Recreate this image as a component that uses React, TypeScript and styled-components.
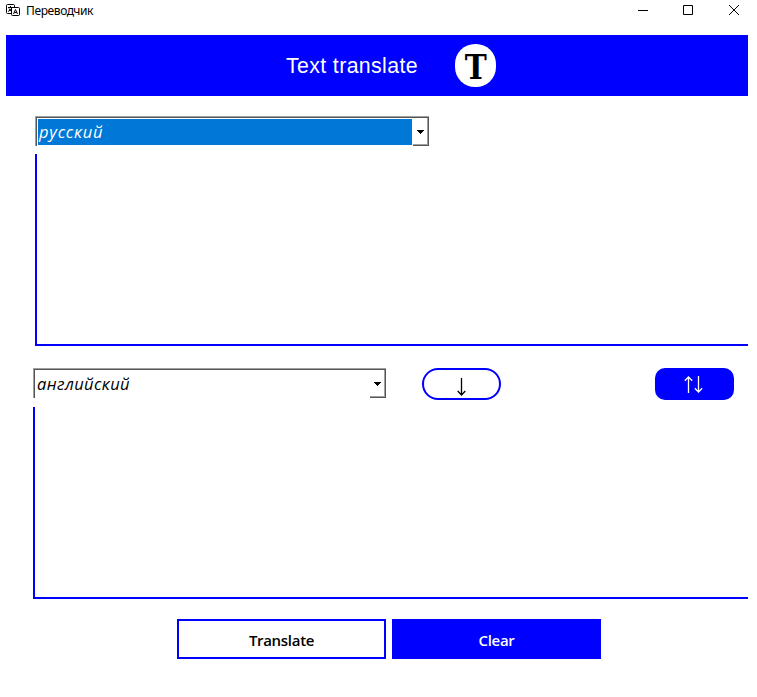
import React from "react";
import styled, { createGlobalStyle } from "styled-components";

const GlobalStyle = createGlobalStyle`
  * { box-sizing: border-box; }
  body { margin: 0; background: #fff; }
`;

const Window = styled.main`
  display: flex;
  flex-direction: column;
  width: 757px;
  height: 697px;
  background: #fff;
  overflow: hidden;
`;

const TitleBar = styled.div`
  display: flex;
  align-items: center;
  height: 35px;
  padding: 0 17px 14px 6px;
`;

const Caption = styled.span`
  flex: 1;
  margin-left: 6px;
  font: 12px/20px "Noto Sans", sans-serif;
  letter-spacing: -0.38px;
  color: #000;
  padding-top: 1px;
`;

const WindowControls = styled.div`
  display: flex;
  gap: 34px;
  padding-bottom: 1px;
`;

const ControlIcon = styled.svg`
  display: block;
  width: 12px;
  height: 12px;
  fill: none;
  stroke: #000;
`;

const Banner = styled.header`
  display: flex;
  align-items: center;
  height: 61px;
  margin: 0 9px 0 6px;
  padding-left: 280px;
  background: #0000ff;
`;

const BannerTitle = styled.h1`
  width: 169px;
  margin: 0;
  font: 400 21.3px/30px "Liberation Sans", sans-serif;
  letter-spacing: 0.38px;
  color: #fff;
`;

const Badge = styled.div`
  display: flex;
  align-items: center;
  justify-content: center;
  width: 41px;
  height: 43px;
  padding-top: 2px;
  border-radius: 20px;
  background: #fff;
`;

const BadgeLetter = styled.span`
  font: 700 34px/40px "DejaVu Serif", serif;
  color: #000;
  transform: scaleX(0.87);
`;

const Controls = styled.div<{ $top: number; $left: number }>`
  display: flex;
  height: 32px;
  margin: ${(p) => p.$top}px 23px 0 ${(p) => p.$left}px;
`;

const Combo = styled.div<{ $width: number }>`
  display: flex;
  width: ${(p) => p.$width}px;
  height: 30px;
  border-top: 1px solid #a0a0a0;
  border-left: 1px solid #a0a0a0;
`;

const ComboInner = styled.div`
  display: flex;
  flex: 1;
  border-top: 1px solid #555;
  border-left: 1px solid #555;
`;

const ComboValue = styled.div<{ $selected?: boolean; $spacing: number }>`
  flex: 1;
  height: 26px;
  margin: 1px 0 0 1px;
  padding-left: 1px;
  background: ${(p) => (p.$selected ? "#0078d7" : "#fff")};
  color: ${(p) => (p.$selected ? "#fff" : "#000")};
  font: italic 400 16.5px/26px "Open Sans", sans-serif;
  letter-spacing: ${(p) => p.$spacing}px;
`;

const ComboButton = styled.div`
  display: flex;
  align-items: center;
  justify-content: center;
  width: 16px;
  height: 28px;
  margin-left: 1px;
  border-right: 1px solid #555;
  border-bottom: 1px solid #555;
  box-shadow: inset -1px -1px #a0a0a0;
`;

const TextPane = styled.div<{ $top: number; $left: number }>`
  height: 192px;
  margin: ${(p) => p.$top}px 9px 0 ${(p) => p.$left}px;
  border-left: 2px solid #0000ff;
  border-bottom: 2px solid #0000ff;
`;

const ArrowButton = styled.button<{ $filled?: boolean }>`
  display: flex;
  align-items: center;
  justify-content: center;
  width: 79px;
  height: 32px;
  margin-left: ${(p) => (p.$filled ? "auto" : "36px")};
  padding: ${(p) => (p.$filled ? "1px 2px 0 0" : "5px 0 0")};
  border: 2px solid #0000ff;
  border-radius: ${(p) => (p.$filled ? "10px" : "16px")};
  background: ${(p) => (p.$filled ? "#0000ff" : "#fff")};
  color: ${(p) => (p.$filled ? "#fff" : "#000")};
`;

const ArrowIcon = styled.svg`
  display: block;
  fill: none;
  stroke: currentColor;
  stroke-width: 1.3;
`;

const Actions = styled.div`
  display: flex;
  gap: 6px;
  margin: 20px 0 0 177px;
`;

const ActionButton = styled.button<{ $filled?: boolean }>`
  width: 209px;
  height: 40px;
  padding: 1px 0 0;
  border: 2px solid #0000ff;
  background: ${(p) => (p.$filled ? "#0000ff" : "#fff")};
  color: ${(p) => (p.$filled ? "#fff" : "#000")};
  font: 600 15px/20px "Open Sans", sans-serif;
  letter-spacing: -0.3px;
`;

function LanguageCombo(props: {
  label: string;
  width: number;
  spacing: number;
  selected?: boolean;
}) {
  return (
    <Combo $width={props.width}>
      <ComboInner>
        <ComboValue $selected={props.selected} $spacing={props.spacing}>
          {props.label}
        </ComboValue>
        <ComboButton>
          <svg width="7" height="4" viewBox="0 0 7 4" shapeRendering="crispEdges">
            <path d="M0 0H7V1H6V2H5V3H4V4H3V3H2V2H1V1H0Z" />
          </svg>
        </ComboButton>
      </ComboInner>
    </Combo>
  );
}

export default function App() {
  return (
    <Window>
      <GlobalStyle />
      <TitleBar>
        <svg width="14" height="13" viewBox="0 0 14 13" fill="none" stroke="#000">
          <path d="M5.5 9.5H1.5Q.5 9.5.5 8.5V1.5Q.5.5 1.5.5H7.5Q8.5.5 8.5 1.5V3.5" />
          <path d="M5.5 4.5Q5.5 3.5 6.5 3.5H12.5Q13.5 3.5 13.5 4.5V10.5Q13.5 11.5 12.5 11.5H6.5Q5.5 11.5 5.5 10.5Z" />
          <path d="M2 3.5H7M4.5 2V3.5M6 3.5Q5 6.5 2 7.5M3 4.5Q3.5 6 5 7M7.5 10L9.5 5.5L11.5 10M8.3 8.5H10.7" />
        </svg>
        <Caption>Переводчик</Caption>
        <WindowControls>
          <ControlIcon viewBox="0 0 12 12"><path d="M2 6.5H12" /></ControlIcon>
          <ControlIcon viewBox="0 0 12 12"><path d="M1.5 1.5H10.5V10.5H1.5Z" /></ControlIcon>
          <ControlIcon viewBox="0 0 12 12"><path d="M1 1L11 11M11 1L1 11" /></ControlIcon>
        </WindowControls>
      </TitleBar>
      <Banner>
        <BannerTitle>Text translate</BannerTitle>
        <Badge><BadgeLetter>T</BadgeLetter></Badge>
      </Banner>
      <Controls $top={20} $left={35}>
        <LanguageCombo label="русский" width={394} spacing={0.75} selected />
      </Controls>
      <TextPane $top={6} $left={35} />
      <Controls $top={22} $left={33}>
        <LanguageCombo label="английский" width={353} spacing={0.4} />
        <ArrowButton aria-label="Down">
          <ArrowIcon width="9" height="18" viewBox="0 0 9 18">
            <path d="M4.5 0V17M.7 13L4.5 17L8.3 13" />
          </ArrowIcon>
        </ArrowButton>
        <ArrowButton $filled aria-label="Swap languages">
          <ArrowIcon width="19" height="17" viewBox="0 0 19 17">
            <path d="M4.5 17V1M.8 4.8L4.5 1L8.2 4.8M14.5 0V16M10.8 12.2L14.5 16L18.2 12.2" />
          </ArrowIcon>
        </ArrowButton>
      </Controls>
      <TextPane $top={7} $left={33} />
      <Actions>
        <ActionButton>Translate</ActionButton>
        <ActionButton $filled>Clear</ActionButton>
      </Actions>
    </Window>
  );
}
